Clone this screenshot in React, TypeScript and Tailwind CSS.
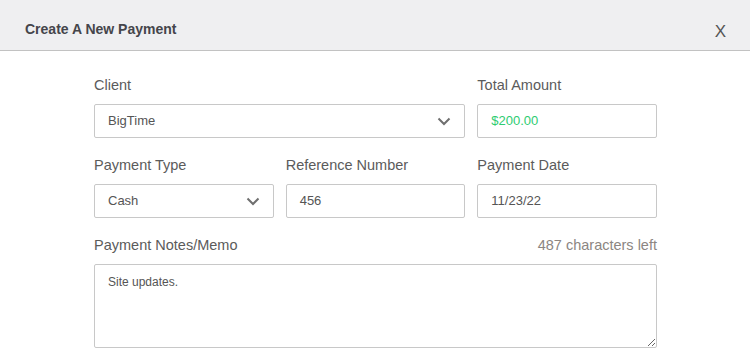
import React from 'react';

const Chevron = () => (
  <svg width="14" height="9" viewBox="0 0 14 9" className="shrink-0">
    <polyline points="1.5,1.5 7,7 12.5,1.5" fill="none" stroke="#6f6f6f" strokeWidth="2" />
  </svg>
);

const Field = ({ label, children }: { label: React.ReactNode; children: React.ReactNode }) => (
  <div className="flex flex-col">
    <div className="h-[20px] leading-[20px] text-[14.5px] text-[#5b5b5b] mb-[9px]">{label}</div>
    {children}
  </div>
);

const Box = ({ children, className = '', green = false }: { children: React.ReactNode; className?: string; green?: boolean }) => (
  <div
    className={`h-[34px] border border-[#c8c8c8] rounded-[2px] bg-white flex items-center pl-[13px] pr-[13px] text-[13px] ${green ? 'text-[#2ecc71]' : 'text-[#555]'} ${className}`}
  >
    {children}
  </div>
);

export default function App() {
  return (
    <div className="w-[750px] h-[357px] bg-white overflow-hidden" style={{ fontFamily: '"Liberation Sans", Arial, sans-serif' }}>
      {/* Modal header */}
      <header className="h-[51px] bg-[#efeff1] border-b border-[#c2c2c2] flex items-center justify-between pl-[25px] pr-[24px]">
        <h1 className="text-[14px] font-bold text-[#45454b] mt-[9px]">Create A New Payment</h1>
        <button className="text-[17px] text-[#555] mt-[12px] leading-none">X</button>
      </header>

      <div className="pl-[94px] pr-[93px] pt-[24px]">
        <div className="grid grid-cols-3 gap-x-[12px] gap-y-[17px]">
          <div className="col-span-2">
            <Field label="Client">
              <Box className="justify-between">
                <span>BigTime</span>
                <Chevron />
              </Box>
            </Field>
          </div>
          <Field label="Total Amount">
            <Box green>$200.00</Box>
          </Field>

          <Field label="Payment Type">
            <Box className="justify-between">
              <span>Cash</span>
              <Chevron />
            </Box>
          </Field>
          <Field label="Reference Number">
            <Box>456</Box>
          </Field>
          <Field label="Payment Date">
            <Box>11/23/22</Box>
          </Field>

          <div className="col-span-3">
            <Field
              label={
                <div className="flex justify-between">
                  <span>Payment Notes/Memo</span>
                  <span className="text-[#8c8682]">487 characters left</span>
                </div>
              }
            >
              <textarea
                readOnly
                defaultValue="Site updates."
                className="h-[84px] w-full border border-[#c8c8c8] rounded-[2px] px-[13px] py-[8px] text-[12px] text-[#555] outline-none resize-y"
                style={{ fontFamily: '"Liberation Sans", Arial, sans-serif' }}
              />
            </Field>
          </div>
        </div>
      </div>
    </div>
  );
}
